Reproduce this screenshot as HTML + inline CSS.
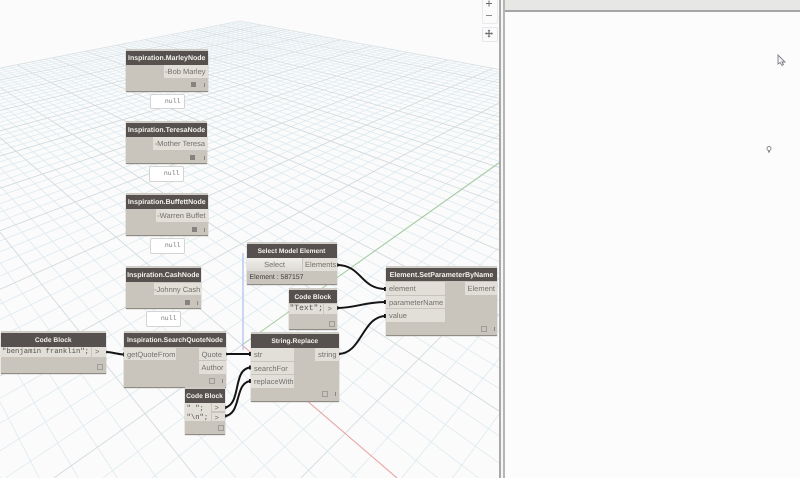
<!DOCTYPE html>
<html><head><meta charset="utf-8">
<style>
html,body{margin:0;padding:0;background:#fbfbfb;width:800px;height:478px;overflow:hidden}
#r{position:relative;width:800px;height:478px;overflow:hidden;background:#fbfbfb;font-family:"Liberation Sans",sans-serif;text-rendering:geometricPrecision;filter:blur(.25px)}
#r div,#r svg{position:absolute}
.n{background:#c9c5bc;border-bottom:1px solid #8f8c85;box-shadow:0 -2px 0 #cfccc5,0 0 1px #9a978f}
.h{left:0;top:0;right:0;height:13.5px;background:#56514e;color:#f4f2ee;font-weight:bold;font-size:7px;line-height:15px;text-align:center;white-space:nowrap;overflow:hidden}
.p{background:#e2dfd8;color:#726f6a;font-size:7.5px;line-height:13.5px;height:12.5px;white-space:nowrap;overflow:hidden}
.l{padding-left:3px;box-sizing:border-box}
.rt{text-align:right;padding-right:2px;box-sizing:border-box}
.m{font-family:"Liberation Mono",monospace;font-size:7.25px;color:#55524e;white-space:pre;line-height:10px}
.s{width:5px;height:5px;background:#86837e}
.c{width:4px;height:4px;border:1px solid #a09d96}
.b{width:1px;height:4px;background:#8b8882}
.null{background:#fff;border:1px solid #d4d4d4;border-radius:2px;box-sizing:border-box;font-family:"Liberation Mono",monospace;font-size:6.5px;color:#777;text-align:right;padding-right:3px;line-height:14px}
</style></head><body><div id="r">
<svg id="g" width="500" height="478" viewBox="0 0 500 478" style="left:0;top:0">
<defs><linearGradient id="fade" x1="0" y1="0" x2="0" y2="1"><stop offset="0" stop-color="#fbfbfb" stop-opacity=".35"/><stop offset="1" stop-color="#fbfbfb" stop-opacity="0"/></linearGradient></defs>
<path id="mi" fill="none" stroke="#dbe9ef" stroke-width=".75"/>
<path id="ma" fill="none" stroke="#d0d9dd" stroke-width=".85"/>
<rect x="0" y="0" width="500" height="130" fill="url(#fade)"/>
<line x1="500" y1="162" x2="242" y2="345" stroke="#a5cf9f" stroke-width="1"/>
<line x1="242" y1="345" x2="397" y2="478" stroke="#ee9f9f" stroke-width="1"/>
<line x1="243" y1="253" x2="243" y2="350" stroke="#bcc8f2" stroke-width="1.5"/>
</svg>
<script>
(function(){var a=1.759,b=1.325,VR=[-241,-69],VG=[877,-104],O=[242,345];
function P(u,v){var w=1-a*u+b*v;return [(-a*u*VR[0]+b*v*VG[0]+O[0])/w,(-a*u*VR[1]+b*v*VG[1]+O[1])/w]}
function seg(p,q){var t0=0,t1=1,dx=q[0]-p[0],dy=q[1]-p[1],L=[[-dx,p[0]-0],[dx,500-p[0]],[-dy,p[1]-0],[dy,478-p[1]]];
 for(var i=0;i<4;i++){var c=L[i][0],d=L[i][1];if(c==0){if(d<0)return '';continue}var r=d/c;if(c<0){if(r>t1)return '';if(r>t0)t0=r}else{if(r<t0)return '';if(r<t1)t1=r}}
 return 'M'+(p[0]+t0*dx).toFixed(1)+' '+(p[1]+t0*dy).toFixed(1)+'L'+(p[0]+t1*dx).toFixed(1)+' '+(p[1]+t1*dy).toFixed(1)}
var mi='',ma='',step=0.02;
for(var i=-50;i<=50;i++){var t=i*step,s;
 var v0=Math.max(-1,(a*t-0.9)/b);
 if(v0<1){s=seg(P(t,v0),P(t,1));if(i%5==0)ma+=s;else mi+=s;}
 var u1=Math.min(1,(1+b*t-0.1)/a);
 if(u1>-1){s=seg(P(-1,t),P(u1,t));if(i%5==0)ma+=s;else mi+=s;}
}
document.getElementById('mi').setAttribute('d',mi);document.getElementById('ma').setAttribute('d',ma);})();
</script>

<!-- right panel -->
<div style="left:499px;top:0;width:1.5px;height:478px;background:#a9a9a9"></div>
<div style="left:500.5px;top:0;width:2.5px;height:478px;background:#f6f6f6"></div>
<div style="left:503px;top:0;width:1.5px;height:478px;background:#b5b5b5"></div>
<div style="left:504.5px;top:0;width:295.5px;height:478px;background:#fcfcfc"></div>
<div style="left:504.5px;top:0;width:295.5px;height:10px;background:#e7e8e6"></div>
<div style="left:504.5px;top:10px;width:295.5px;height:1.5px;background:#a5a5a5"></div>

<!-- view controls -->
<div style="left:482px;top:0;width:14px;height:23px;background:#fbfbfb;border:1px solid #e8eaec;border-top:0;border-radius:0 0 2px 2px"></div>
<div style="left:482px;top:27px;width:14px;height:13px;background:#fbfbfb;border:1px solid #e4e8ec;border-radius:2px"></div>
<svg width="30" height="45" viewBox="0 0 30 45" style="left:475px;top:0" fill="none" stroke="#6f6f6f" stroke-width="1">
<path d="M11 3.5H17M14 .5V6.5"/><path d="M11 15.5H17" stroke="#8a8a8a"/>
<path d="M10.5 33.5H17.5M14 30V37" stroke-width="1.2"/>
<path d="M10 33.5L11.5 32V35ZM18 33.5L16.5 32V35ZM14 29.5L12.5 31H15.500ZM14 37.500L12.5 36H15.500Z" fill="#6f6f6f" stroke="none"/>
</svg>

<!-- wires -->
<svg width="800" height="478" viewBox="0 0 800 478" style="left:0;top:0" fill="none" stroke="#141414" stroke-width="2">
<path d="M106 352C112 352 116 354 124 354.500"/>
<path d="M226 354H251"/>
<path d="M225 407.500C242 404 232 368 251 367.500"/>
<path d="M225 416C242 414 234 382 251 381"/>
<path d="M337 265C362 265 360 289 386 289"/>
<path d="M337 308C355 308 365 302 386 302"/>
<path d="M338 354C362 354 362 316 386 316"/>
<g fill="#141414" stroke="none">
<path d="M105 350L109 352L105 354ZM123 352.500L125 352.500V356.500L123 356.500ZM225 352L229 354L225 356ZM249 352H251.500V356H249ZM249 365.500H251.500V369.500H249ZM249 379H251.500V383H249ZM337 263L341 265L337 267ZM337 306L341 308L337 310ZM338 352L342 354L338 356ZM384 287H386.500V291H384ZM384 300H386.500V304H384ZM384 314H386.500V318H384ZM225 405.500L228 407.500L225 409.500ZM225 414L228 416L225 418Z"/>
</g>
</svg>

<!-- Marley -->
<div class="n" style="left:126px;top:51px;width:81.500px;height:39.500px">
<div class="h">Inspiration.MarleyNode</div>
<div class="p rt" style="left:38px;top:14px;width:43.500px">-Bob Marley</div>
<div class="s" style="left:65px;top:31px"></div><div class="b" style="left:78px;top:32px"></div>
</div>
<div class="null" style="left:149.500px;top:93.500px;width:35px;height:15px">null</div>

<!-- Teresa -->
<div class="n" style="left:126px;top:123px;width:81px;height:40px">
<div class="h">Inspiration.TeresaNode</div>
<div class="p rt" style="left:27px;top:14px;width:54px">-Mother Teresa</div>
<div class="s" style="left:64px;top:32px"></div><div class="b" style="left:78px;top:33px"></div>
</div>
<div class="null" style="left:148.500px;top:166px;width:35px;height:15.500px">null</div>

<!-- Buffett -->
<div class="n" style="left:126px;top:195px;width:81.500px;height:40px">
<div class="h">Inspiration.BuffettNode</div>
<div class="p rt" style="left:30px;top:14px;width:51.500px">-Warren Buffet</div>
<div class="s" style="left:66px;top:32px"></div><div class="b" style="left:78px;top:33px"></div>
</div>
<div class="null" style="left:149.500px;top:238px;width:35px;height:16px">null</div>

<!-- Cash -->
<div class="n" style="left:126px;top:268px;width:74.500px;height:40px">
<div class="h">Inspiration.CashNode</div>
<div class="p rt" style="left:28px;top:14.500px;width:46.500px">-Johnny Cash</div>
<div class="s" style="left:59px;top:32px"></div><div class="b" style="left:71px;top:33px"></div>
</div>
<div class="null" style="left:145.500px;top:311px;width:35px;height:15.500px">null</div>

<!-- Code Block 1 -->
<div class="n" style="left:1px;top:333px;width:104.500px;height:40px">
<div class="h" style="font-size:6.7px">Code Block</div>
<div class="m" style="left:0;top:14px;width:90px;height:10px;background:#e2dfd8;padding-left:1px;box-sizing:border-box">"benjamin franklin";</div>
<div class="p" style="left:91px;top:14px;width:13.500px;height:10px;line-height:10px;padding-left:3px;box-sizing:border-box">&gt;</div>
<div class="c" style="left:96px;top:31px"></div>
</div>

<!-- Search Quote -->
<div class="n" style="left:124px;top:333px;width:102px;height:53.500px">
<div class="h" style="font-size:6.8px">Inspiration.SearchQuoteNode</div>
<div class="p l" style="left:0;top:14.500px;width:52px">getQuoteFrom</div>
<div class="p rt" style="left:74.500px;top:14.500px;width:27.500px;padding-right:4px">Quote</div>
<div class="p rt" style="left:74.500px;top:28px;width:27.500px;padding-right:2.500px">Author</div>
<div class="c" style="left:85px;top:45px"></div><div class="b" style="left:98px;top:46px"></div>
</div>

<!-- Code Block 2 -->
<div class="n" style="left:184.500px;top:389px;width:40px;height:45px">
<div class="h" style="font-size:6.7px">Code Block</div>
<div style="left:0;top:14px;width:26.500px;height:18px;background:#e2dfd8"></div>
<div class="m" style="left:2px;top:15px">" ";</div>
<div class="m" style="left:2px;top:23.500px">"\n";</div>
<div class="p" style="left:27px;top:14px;width:13px;height:8px;line-height:9px;padding-left:3px;box-sizing:border-box">&gt;</div>
<div class="p" style="left:27px;top:23.500px;width:13px;height:8px;line-height:9px;padding-left:3px;box-sizing:border-box">&gt;</div>
<div class="c" style="left:33px;top:36px"></div>
</div>

<!-- Select Model Element -->
<div class="n" style="left:246.500px;top:244px;width:90px;height:40px">
<div class="h" style="font-size:6.6px">Select Model Element</div>
<div class="p" style="left:0.500px;top:14px;width:55px;height:12.500px;text-align:center;background:linear-gradient(#f0eee9,#dcdad4)">Select</div>
<div class="p" style="left:56.500px;top:14px;width:33.500px;padding-left:2px;box-sizing:border-box">Elements</div>
<div style="left:3px;top:29px;font-size:6.900px;line-height:10px;color:#3f3d3a;white-space:nowrap">Element : 587157</div>
</div>

<!-- Code Block 3 -->
<div class="n" style="left:288.500px;top:289.500px;width:48.500px;height:39.500px">
<div class="h" style="font-size:6.7px">Code Block</div>
<div class="m" style="left:0;top:14px;width:34px;height:10px;background:#e2dfd8;padding-left:1px;box-sizing:border-box;font-size:8px">"Text";</div>
<div class="p" style="left:35px;top:14px;width:13.500px;height:10px;line-height:10px;padding-left:4px;box-sizing:border-box">&gt;</div>
<div class="c" style="left:40px;top:31px"></div>
</div>

<!-- String.Replace -->
<div class="n" style="left:251px;top:334px;width:87.500px;height:66.500px">
<div class="h" style="font-size:6.7px">String.Replace</div>
<div class="p l" style="left:0;top:14px;width:43px">str</div>
<div class="p l" style="left:0;top:27.500px;width:43px">searchFor</div>
<div class="p l" style="left:0;top:41px;width:43px">replaceWith</div>
<div class="p rt" style="left:64px;top:14px;width:23.500px">string</div>
<div class="c" style="left:71px;top:57px"></div><div class="b" style="left:84px;top:58px"></div>
</div>

<!-- SetParameterByName -->
<div class="n" style="left:386px;top:268px;width:111px;height:67px">
<div class="h" style="height:13px;font-size:7.1px;line-height:14.500px">Element.SetParameterByName</div>
<div class="p l" style="left:0;top:14px;width:59px">element</div>
<div class="p l" style="left:0;top:27.500px;width:59px">parameterName</div>
<div class="p l" style="left:0;top:41px;width:59px">value</div>
<div class="p rt" style="left:79px;top:14px;width:32px">Element</div>
<div class="c" style="left:94.500px;top:58px"></div><div class="b" style="left:108px;top:59px"></div>
</div>

<!-- cursor & bulb -->
<svg width="14" height="16" viewBox="0 0 14 16" style="left:775px;top:53px" fill="#f4f4f4" stroke="#7d7d86" stroke-width=".9">
<path d="M3 2V11L5 9.500L7 12.500L8.500 11.500L7 9H10Z"/>
</svg>
<svg width="8" height="9" viewBox="0 0 8 9" style="left:765px;top:145px">
<circle cx="4" cy="3.500" r="2" fill="#fff" stroke="#8b8b8b"/><rect x="3" y="6" width="2" height="1.500" fill="#8b8b8b"/>
</svg>
</div></body></html>
